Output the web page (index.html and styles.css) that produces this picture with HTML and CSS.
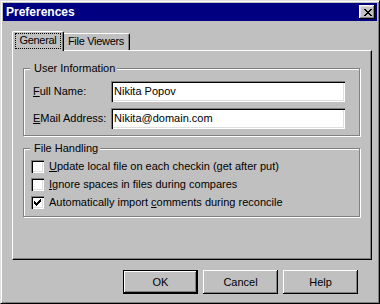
FILE: index.html
```html
<!DOCTYPE html>
<html lang="en">
<head>
  <meta charset="UTF-8" />
  <title>Preferences</title>
  <link rel="stylesheet" href="styles.css">
</head>
<body>
  <div class="window">
    <div class="titlebar">
      <span class="title">Preferences</span>
      <button class="close" aria-label="Close">
        <svg width="8" height="7" viewBox="0 0 8 7"><path fill="#000" d="M0 0h2v1H0z M6 0h2v1H6z M1 1h2v1H1z M5 1h2v1H5z M2 2h4v1H2z M3 3h2v1H3z M2 4h4v1H2z M1 5h2v1H1z M5 5h2v1H5z M0 6h2v1H0z M6 6h2v1H6z"/></svg>
      </button>
    </div>

    <div class="tabs">
      <div class="tab active"><span class="focus">General</span></div>
      <div class="tab">File Viewers</div>
    </div>

    <div class="panel">
      <div class="group info">
        <div class="group-title">User Information</div>
        <div class="field">
          <label><u>F</u>ull Name:</label>
          <div class="input">Nikita Popov</div>
        </div>
        <div class="field">
          <label><u>E</u>Mail Address:</label>
          <div class="input">Nikita@domain.com</div>
        </div>
      </div>

      <div class="group handling">
        <div class="group-title">File Handling</div>
        <div class="option">
          <span class="check"></span>
          <span><u>U</u>pdate local file on each checkin (get after put)</span>
        </div>
        <div class="option">
          <span class="check"></span>
          <span><u>I</u>gnore spaces in files during compares</span>
        </div>
        <div class="option">
          <span class="check">
            <svg width="7" height="7" viewBox="0 0 7 7"><path fill="#000" d="M0 2h1v3H0z M1 3h1v3H1z M2 4h1v3H2z M3 3h1v3H3z M4 2h1v3H4z M5 1h1v3H5z M6 0h1v3H6z"/></svg>
          </span>
          <span>Automatically import <u>c</u>omments during reconcile</span>
        </div>
      </div>
    </div>

    <div class="buttons">
      <button class="btn default">OK</button>
      <button class="btn">Cancel</button>
      <button class="btn">Help</button>
    </div>
  </div>
</body>
</html>
```

FILE: styles.css
```css
body {
  margin: 0;
  background-color: #c0c0c0;
  font-family: "Liberation Sans", Arial, sans-serif;
  font-size: 11px;
  line-height: 13px;
  color: #000;
}

.window {
  box-sizing: border-box;
  width: 380px;
  height: 304px;
  padding: 2px;
  background-color: #c0c0c0;
  border: 1px solid;
  border-color: #dfdfdf #000 #000 #dfdfdf;
  box-shadow: inset 1px 1px #fff, inset -1px -1px #808080;
}

/* title bar */
.titlebar {
  display: flex;
  align-items: center;
  justify-content: space-between;
  height: 18px;
  padding-left: 3px;
  background-color: #000080;
  color: #fff;
}

.title {
  font-weight: bold;
  font-size: 12px;
  line-height: 14px;
}

.close {
  display: flex;
  align-items: center;
  justify-content: center;
  width: 16px;
  height: 14px;
  margin-right: 2px;
  padding: 0 0 0 1px;
  border: none;
  background-color: #c0c0c0;
  box-shadow: inset -1px -1px #000, inset 1px 1px #fff, inset -2px -2px #808080, inset 2px 2px #dfdfdf;
}

/* tabs */
.tabs {
  display: flex;
  align-items: flex-end;
  height: 19px;
  margin: 10px 0 0 9px;
  letter-spacing: -0.3px;
}

.tab {
  box-sizing: border-box;
  display: flex;
  justify-content: center;
  height: 17px;
  width: 68px;
  margin-left: -2px;
  padding-top: 1px;
  border-top: 1px solid #fff;
  border-left: 1px solid #fff;
  border-right: 1px solid #000;
  border-radius: 2px 2px 0 0;
  box-shadow: inset -1px 0 #808080;
  background-color: #c0c0c0;
}

.tab.active {
  position: relative;
  z-index: 1;
  width: 52px;
  height: 20px;
  margin-left: 0;
  margin-bottom: -1px;
}

.focus {
  height: 14px;
  padding: 0 3px;
  border: 1px dotted #000;
}

/* tab page */
.panel {
  box-sizing: border-box;
  height: 210px;
  margin: 0 5px 0 9px;
  padding: 17px 11px 0 10px;
  border-top: 1px solid #fff;
  border-left: 1px solid #fff;
  border-right: 1px solid #000;
  border-bottom: 1px solid #000;
  box-shadow: inset -1px -1px #808080;
}

.group {
  border: 1px solid #808080;
  box-shadow: inset 1px 1px #fff, 1px 1px #fff;
  padding: 0 14px 6px 7px;
}

.group-title {
  width: fit-content;
  margin: -7px 0 0 -1px;
  padding: 0 2px 0 4px;
  background-color: #c0c0c0;
}

.field {
  display: flex;
  align-items: center;
  margin-top: 6px;
  padding-left: 2px;
}

.info .field:first-of-type {
  margin-top: 11px;
}

.field label {
  flex: 0 0 78px;
}

.input {
  box-sizing: border-box;
  flex: 1;
  display: flex;
  align-items: center;
  height: 21px;
  padding: 0 3px;
  background-color: #fff;
  box-shadow: inset 1px 1px #808080, inset 2px 2px #000, inset -1px -1px #fff, inset -2px -2px #dfdfdf;
}

.handling {
  margin-top: 12px;
  padding-bottom: 7px;
}

.option {
  display: flex;
  align-items: center;
  gap: 5px;
  height: 13px;
  margin-top: 5px;
}

.handling .option:first-of-type {
  margin-top: 6px;
}

.check {
  box-sizing: border-box;
  display: flex;
  align-items: center;
  justify-content: center;
  width: 13px;
  height: 13px;
  background-color: #fff;
  box-shadow: inset 1px 1px #808080, inset 2px 2px #000, inset -1px -1px #fff, inset -2px -2px #dfdfdf;
}

/* dialog buttons */
.buttons {
  display: flex;
  justify-content: flex-end;
  gap: 5px;
  margin-top: 10px;
  padding-right: 19px;
}

.btn {
  box-sizing: border-box;
  width: 75px;
  height: 24px;
  padding: 0;
  border: none;
  background-color: #c0c0c0;
  font-family: inherit;
  font-size: 11px;
  color: #000;
  box-shadow: inset -1px -1px #000, inset 1px 1px #fff, inset -2px -2px #808080;
}

.btn.default {
  border: 1px solid #000;
}
```
